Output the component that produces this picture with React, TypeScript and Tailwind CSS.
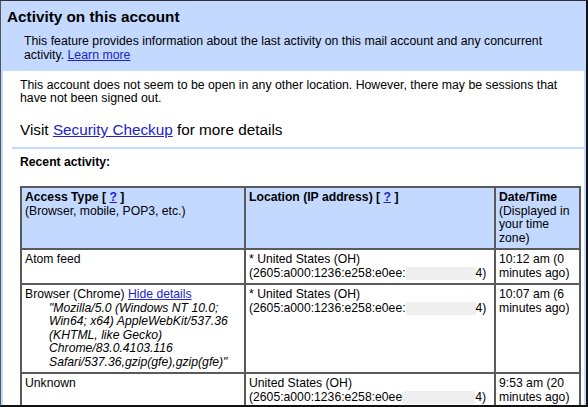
export default function App() {
  const link = "text-[#2222cc] underline"

  // blurred part of the IP address
  const Blur = ({ w }: { w: number }) => (
    <span
      className="inline-block h-[13.5px] align-top bg-[#efefef]"
      style={{ width: w }}
    />
  )

  return (
    <div className="w-[588px] h-[407px] overflow-hidden border-l border-t border-l-[#555] border-t-[#333] border-r-2 border-b-2 border-r-[#111] border-b-[#111] bg-white text-black font-['Liberation_Sans',Arial,sans-serif]">
      <div className="h-full border-x-2 border-[#c3d9ff]">
        {/* header */}
        <div className="h-[70px] bg-[#c3d9ff] pl-[4px] pt-[6.5px]">
          <h1 className="text-[15.3px] leading-[18px] font-bold">Activity on this account</h1>
          <p className="mt-[8.5px] ml-[17px] text-[12.3px] leading-[14px]">
            This feature provides information about the last activity on this mail account and any concurrent
            activity. <a className={link}>Learn more</a>
          </p>
        </div>

        {/* body */}
        <div className="pt-[7.5px]">
          <p className="ml-[17px] text-[12.3px] leading-[13.5px]">
            This account does not seem to be open in any other location. However, there may be sessions that have
            not been signed out.
          </p>
          <p className="ml-[17px] mt-[15.7px] text-[15.3px] leading-[18px]">
            Visit <a className={link}>Security Checkup</a> for more details
          </p>
          <div className="ml-[9px] mt-[8.3px] h-[2px] bg-[#c3d9ff]" />
          <p className="ml-[17px] mt-[6.7px] text-[12.2px] leading-[13.5px] font-bold">Recent activity:</p>

          <table className="ml-[17px] mt-[16.8px] w-[561px] table-fixed border-separate border-spacing-0 border border-[#5a5a5a] text-[12.2px] leading-[13.5px]">
            <colgroup>
              <col className="w-[224px]" />
              <col className="w-[250px]" />
              <col className="w-[85px]" />
            </colgroup>
            <thead>
              <tr className="bg-[#c3d9ff] text-left align-top">
                <th className="border border-[#5a5a5a] p-[3px] font-normal">
                  <b>
                    Access Type [ <a className={link}>?</a> ]
                  </b>
                  <br />
                  (Browser, mobile, POP3, etc.)
                </th>
                <th className="border border-[#5a5a5a] p-[3px] font-normal">
                  <b>
                    Location (IP address) [ <a className={link}>?</a> ]
                  </b>
                </th>
                <th className="border border-[#5a5a5a] p-[3px] font-normal">
                  <b>Date/Time</b>
                  <br />
                  (Displayed in your time zone)
                </th>
              </tr>
            </thead>
            <tbody>
              <tr className="align-top">
                <td className="border border-[#5a5a5a] p-[3px]">Atom feed</td>
                <td className="border border-[#5a5a5a] p-[3px]">
                  * United States (OH)
                  <div className="whitespace-nowrap">
                    (2605:a000:1236:e258:e0ee:
                    <Blur w={70} />
                    4)
                  </div>
                </td>
                <td className="border border-[#5a5a5a] p-[3px]">10:12 am (0 minutes ago)</td>
              </tr>
              <tr className="align-top">
                <td className="border border-[#5a5a5a] p-[3px]">
                  Browser (Chrome) <a className={link}>Hide details</a>
                  <div className="pl-[24px] italic">
                    "Mozilla/5.0 (Windows NT 10.0; Win64; x64) AppleWebKit/537.36 (KHTML, like Gecko)
                    Chrome/83.0.4103.116 Safari/537.36,gzip(gfe),gzip(gfe)"
                  </div>
                </td>
                <td className="border border-[#5a5a5a] p-[3px]">
                  * United States (OH)
                  <div className="whitespace-nowrap">
                    (2605:a000:1236:e258:e0ee:
                    <Blur w={70} />
                    4)
                  </div>
                </td>
                <td className="border border-[#5a5a5a] p-[3px]">10:07 am (6 minutes ago)</td>
              </tr>
              <tr className="align-top">
                <td className="border border-[#5a5a5a] p-[3px]">Unknown</td>
                <td className="border border-[#5a5a5a] p-[3px]">
                  United States (OH)
                  <div className="whitespace-nowrap">
                    (2605:a000:1236:e258:e0ee
                    <Blur w={73} />
                    4)
                  </div>
                </td>
                <td className="border border-[#5a5a5a] p-[3px]">9:53 am (20 minutes ago)</td>
              </tr>
            </tbody>
          </table>
        </div>
      </div>
    </div>
  )
}
